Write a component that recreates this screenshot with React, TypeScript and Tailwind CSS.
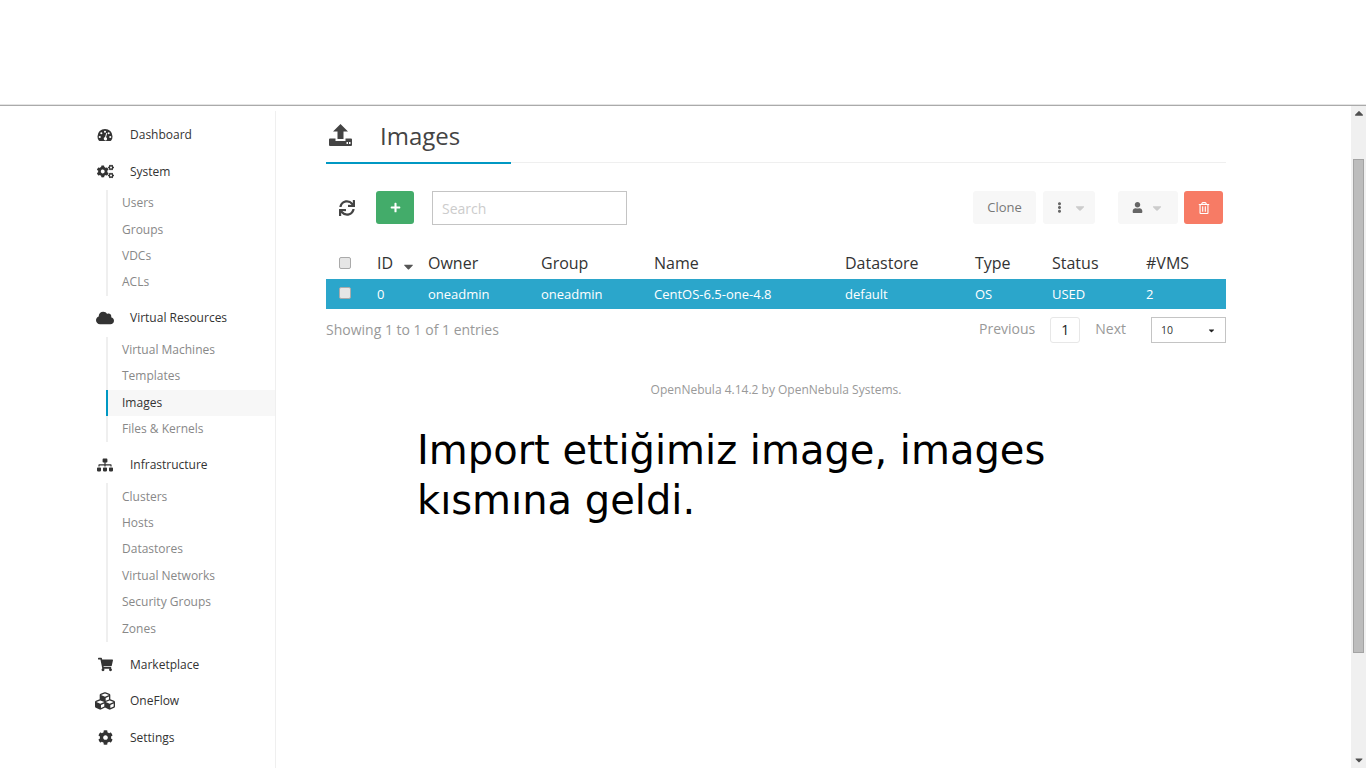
import type { ReactNode } from "react";
import { FaCaretDown, FaCaretUp, FaCloud, FaCog, FaCogs, FaCubes, FaEllipsisV, FaPlus, FaRegTrashAlt, FaShoppingCart, FaSitemap, FaSync, FaUser } from "react-icons/fa";

type MenuGroup = {
  label: string;
  icon: ReactNode;
  children?: string[];
};

function GaugeIcon() {
  return (
    <svg width="16" height="14" viewBox="0 0 18 16" fill="currentColor">
      <path
        fillRule="evenodd"
        d="M9 1 A8.6 8.6 0 0 0 .4 9.6 C.4 11.4 .9 13 1.9 14.4 Q2.2 14.8 2.8 14.8 H15.2 Q15.8 14.8 16.1 14.4 C17.1 13 17.6 11.4 17.6 9.6 A8.6 8.6 0 0 0 9 1 Z M9 3 A1.2 1.2 0 1 1 9 5.4 A1.2 1.2 0 1 1 9 3 Z M4.8 4.8 A1.2 1.2 0 1 1 4.8 7.2 A1.2 1.2 0 1 1 4.8 4.8 Z M13.2 4.8 A1.2 1.2 0 1 1 13.2 7.2 A1.2 1.2 0 1 1 13.2 4.8 Z M3 9 A1.2 1.2 0 1 1 3 11.4 A1.2 1.2 0 1 1 3 9 Z M15 9 A1.2 1.2 0 1 1 15 11.4 A1.2 1.2 0 1 1 15 9 Z M10.4 5.6 L11.5 5.9 L10.2 10.6 A1.9 1.9 0 1 1 7.6 12.6 A1.9 1.9 0 0 1 9.1 10.3 Z"
      />
    </svg>
  );
}

const menu: MenuGroup[] = [
  { label: "Dashboard", icon: <GaugeIcon /> },
  { label: "System", icon: <FaCogs className="text-[17px]" />, children: ["Users", "Groups", "VDCs", "ACLs"] },
  {
    label: "Virtual Resources",
    icon: <FaCloud className="text-[18px]" />,
    children: ["Virtual Machines", "Templates", "Images", "Files & Kernels"]
  },
  {
    label: "Infrastructure",
    icon: <FaSitemap className="text-[16px]" />,
    children: ["Clusters", "Hosts", "Datastores", "Virtual Networks", "Security Groups", "Zones"]
  },
  { label: "Marketplace", icon: <FaShoppingCart className="text-[15px]" /> },
  { label: "OneFlow", icon: <FaCubes className="text-[20px]" /> },
  { label: "Settings", icon: <FaCog className="text-[15px]" /> }
];

const columns = "grid grid-cols-[51px_51px_113px_113px_191px_130px_77px_94px_80px] items-center";

function Sidebar() {
  return (
    <aside className="mt-[5px] w-[276px] shrink-0 border-r border-[#efefef] pt-[5.8px] text-[12px]">
      {menu.map((group) => (
        <div key={group.label}>
          <div className="flex h-[36.6px] items-center text-[#333]">
            <span className="ml-[90px] flex w-[30px] justify-center text-[#333]">{group.icon}</span>
            <span className="ml-[10px]">{group.label}</span>
          </div>
          {group.children ? (
            <ul className="mb-[4.6px] ml-[106px] border-l-2 border-[#efefef] text-[#888]">
              {group.children.map((child) =>
                child === "Images" ? (
                  <li key={child} className="-ml-[2px] flex h-[26.4px] items-center border-l-2 border-[#0098c3] bg-[#f7f7f7] pl-[14px] text-[#333]">
                    {child}
                  </li>
                ) : (
                  <li key={child} className="flex h-[26.4px] items-center pl-[14px]">
                    {child}
                  </li>
                )
              )}
            </ul>
          ) : null}
        </div>
      ))}
    </aside>
  );
}

function UploadIcon() {
  return (
    <svg width="23" height="22" viewBox="0 0 23 22" className="ml-[3px] text-[#444]" fill="currentColor">
      <path d="M11.500 0 L19 7.500 H14.500 V15 H8.500 V7.500 H4 Z" />
      <path d="M1 14.500 H6.500 V17 H16.500 V14.500 H22 Q23 14.500 23 15.500 V21 Q23 22 22 22 H1 Q0 22 0 21 V15.500 Q0 14.500 1 14.500 Z M17.500 18 V20 H19 V18 Z M20 18 V20 H21.500 V18 Z" fillRule="evenodd" />
    </svg>
  );
}

function Checkbox() {
  return <span className="block h-[12px] w-[12px] rounded-[2px] border border-[#aaa] bg-[#e6e6e6]" />;
}

function Toolbar() {
  return (
    <div className="mt-[28px] flex h-[34px] items-start">
      <span className="flex h-[33px] w-[42px] items-center justify-center text-[16px] text-[#444]">
        <FaSync />
      </span>
      <button type="button" className="ml-[8px] flex h-[33px] w-[38px] items-center justify-center rounded-[3px] bg-[#43ac6a] text-[11px] text-white">
        <FaPlus />
      </button>
      <div className="ml-[18px] flex h-[34px] w-[195px] items-center border border-[#c4c4c4] pl-[9px] text-[14px] text-[#ccc]">Search</div>
      <button type="button" className="ml-auto h-[33px] w-[63px] rounded-[3px] bg-[#f7f7f7] text-[13px] text-[#777]">
        Clone
      </button>
      <button type="button" className="ml-[7px] flex h-[33px] w-[52px] items-center gap-[8px] rounded-[3px] bg-[#f7f7f7] pl-[11px] text-[#666]">
        <FaEllipsisV className="text-[11px]" />
        <FaCaretDown className="text-[14px] text-[#ccc]" />
      </button>
      <button type="button" className="ml-[23px] flex h-[33px] w-[60px] items-center gap-[7px] rounded-[3px] bg-[#f7f7f7] pl-[14px] text-[#666]">
        <FaUser className="text-[11px]" />
        <FaCaretDown className="text-[14px] text-[#ccc]" />
      </button>
      <button type="button" className="ml-[6px] mr-[3px] flex h-[33px] w-[39px] items-center justify-center rounded-[3px] bg-[#f77b65] text-[12px] text-white">
        <FaRegTrashAlt />
      </button>
    </div>
  );
}

function ImagesTable() {
  return (
    <div className="mt-[24px]">
      <div className={`${columns} h-[30px] pb-[2px] text-[16px] text-[#333]`}>
        <span className="flex justify-center pr-[14px]">
          <Checkbox />
        </span>
        <span className="relative">
          ID
          <FaCaretDown className="absolute left-[24px] top-[8px] text-[15px] text-[#555]" />
        </span>
        <span>Owner</span>
        <span>Group</span>
        <span>Name</span>
        <span>Datastore</span>
        <span>Type</span>
        <span>Status</span>
        <span>#VMS</span>
      </div>
      <div className={`${columns} h-[30px] bg-[#2ba6cb] pt-[1px] text-[13px] text-white`}>
        <span className="-mt-[4px] flex justify-center pr-[14px]">
          <Checkbox />
        </span>
        <span>0</span>
        <span>oneadmin</span>
        <span>oneadmin</span>
        <span>CentOS-6.5-one-4.8</span>
        <span>default</span>
        <span>OS</span>
        <span>USED</span>
        <span>2</span>
      </div>
    </div>
  );
}

function Pagination() {
  return (
    <div className="mt-[8px] flex h-[26px] items-center text-[14px] text-[#999]">
      <span className="-mt-[1px]">Showing 1 to 1 of 1 entries</span>
      <span className="-mt-[3px] ml-auto">Previous</span>
      <span className="ml-[15px] flex h-[26px] w-[30px] items-center justify-center rounded-[3px] border border-[#e7e7e7] pb-[2px] text-[#222]">1</span>
      <span className="-mt-[3px] ml-[15px]">Next</span>
      <div className="ml-[25px] flex h-[26px] w-[75px] items-center justify-between border border-[#c4c4c4] pl-[9px] pr-[9px] text-[10.5px] text-[#333]">
        <span className="mt-[2px]">10</span>
        <FaCaretDown className="text-[9px] text-[#222]" />
      </div>
    </div>
  );
}

function ScrollBar() {
  return (
    <div className="flex w-[15px] shrink-0 flex-col items-center bg-[#f0f0f0]">
      <FaCaretUp className="h-[14px] text-[12px] text-[#505050]" />
      <div className="mt-[39px] h-[494px] w-[11px] border border-[#a3a3a3] bg-[#bcbcbc]" />
      <FaCaretDown className="mt-auto mb-[2px] text-[12px] text-[#505050]" />
    </div>
  );
}

export default function App() {
  return (
    <div className="flex h-screen flex-col overflow-hidden bg-white font-['Open_Sans',sans-serif]">
      <header className="h-[106px] shrink-0 border-b border-[#aaa] shadow-[inset_0_-1px_0_#e4e4e4]" />
      <div className="flex min-h-0 flex-1">
        <Sidebar />
        <main className="min-w-0 flex-1 pl-[50px]">
          <div className="w-[900px]">
            <div className="flex h-[57px] items-start border-b border-[#efefef]">
              <div className="flex h-[58px] w-[185px] items-center border-b-2 border-[#0098c3] pt-[2px]">
                <UploadIcon />
                <h1 className="ml-[28px] mt-[2px] text-[24px] text-[#444]">Images</h1>
              </div>
            </div>
            <Toolbar />
            <ImagesTable />
            <Pagination />
            <p className="mt-[38px] text-center text-[12px] text-[#999]">OpenNebula 4.14.2 by OpenNebula Systems.</p>
            <p className="ml-[91px] mt-[26px] w-[680px] font-['DejaVu_Sans',sans-serif] text-[40px] leading-[50px] text-black">
              Import ettiğimiz image, images kısmına geldi.
            </p>
          </div>
        </main>
        <ScrollBar />
      </div>
    </div>
  );
}
